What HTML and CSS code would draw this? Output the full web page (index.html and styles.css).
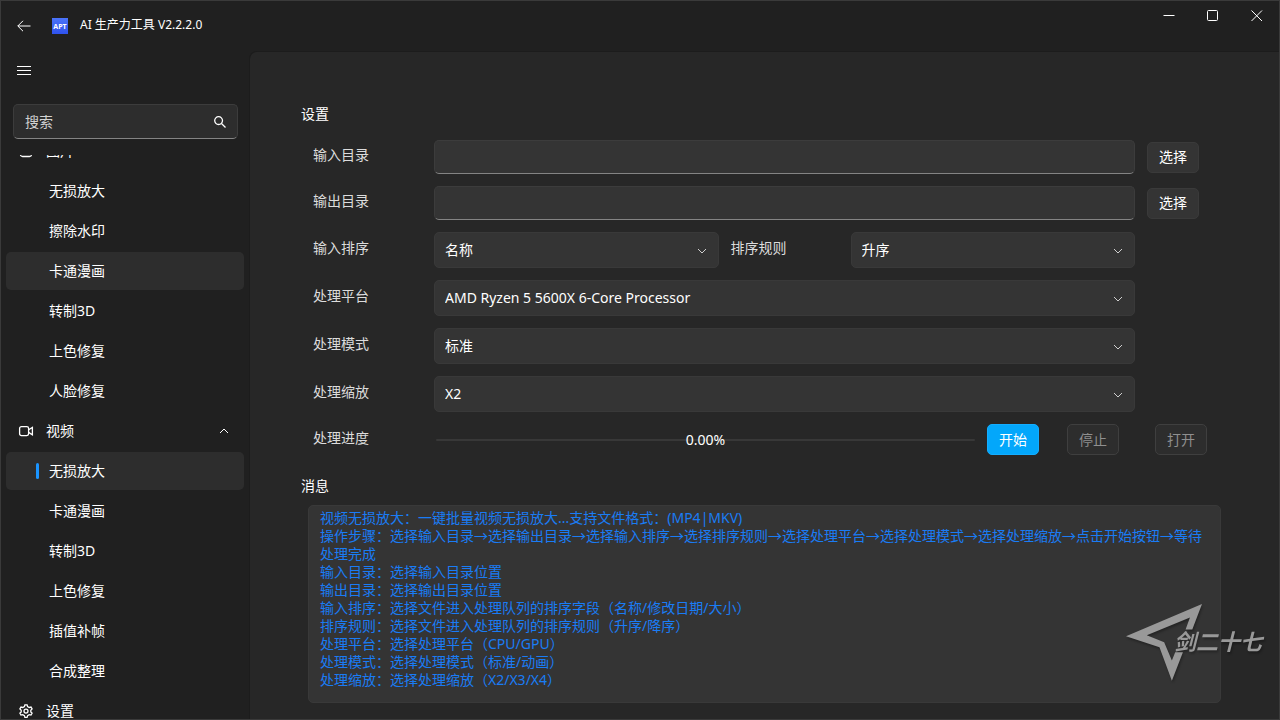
FILE: index.html
```html
<!DOCTYPE html>
<html lang="zh-CN">
<head>
<meta charset="utf-8">
<title>AI 生产力工具</title>
<link rel="stylesheet" href="styles.css">
</head>
<body>
<div class="window">
  <header class="titlebar">
    <button class="icon-button back" type="button" aria-label="返回">
      <svg width="14" height="12" viewBox="0 0 14 12"><path d="M6 .8 .8 6 6 11.200M.8 6H13.500"/></svg>
    </button>
    <svg class="app-logo" width="16" height="16" viewBox="0 0 16 16" aria-hidden="true">
      <defs><linearGradient id="logo" x1="0" y1="0" x2="0" y2="1"><stop offset="0" stop-color="#4b74fa"/><stop offset="1" stop-color="#2f52ee"/></linearGradient></defs>
      <rect width="16" height="16" fill="url(#logo)"/>
      <text class="logo-text" x="8" y="11" text-anchor="middle">APT</text>
    </svg>
    <h1 class="app-title">AI 生产力工具 V2.2.2.0</h1>
    <div class="window-buttons">
      <button class="icon-button caption" type="button" aria-label="最小化"><svg width="12" height="12" viewBox="0 0 12 12"><path d="M.5 5.500h11"/></svg></button>
      <button class="icon-button caption" type="button" aria-label="最大化"><svg width="12" height="12" viewBox="0 0 12 12"><rect x=".5" y=".5" width="10" height="10" rx="1"/></svg></button>
      <button class="icon-button caption" type="button" aria-label="关闭"><svg width="12" height="12" viewBox="0 0 12 12"><path d="m.5.5 10.500 10.500M11 .5.5 11"/></svg></button>
    </div>
  </header>

  <aside class="sidebar">
    <button class="icon-button menu" type="button" aria-label="菜单">
      <svg width="14" height="11" viewBox="0 0 14 11"><path d="M0 1.500h14M0 5.500h14M0 9.500h14"/></svg>
    </button>
    <div class="search">
      <input class="search-input" type="search" placeholder="搜索" aria-label="搜索">
      <svg class="search-icon" width="12" height="12" viewBox="0 0 12 12"><circle cx="4.600" cy="4.600" r="3.900"/><path d="m7.500 7.500 4 4"/></svg>
    </div>
    <nav class="nav">
      <a class="nav-item group first" href="#">
        <svg class="nav-icon" width="16" height="16" viewBox="0 0 16 16"><rect x="2.500" y="2.500" width="11" height="11" rx="2"/></svg>图片
      </a>
      <a class="nav-item" href="#">无损放大</a>
      <a class="nav-item" href="#">擦除水印</a>
      <a class="nav-item active" href="#">卡通漫画</a>
      <a class="nav-item" href="#">转制3D</a>
      <a class="nav-item" href="#">上色修复</a>
      <a class="nav-item" href="#">人脸修复</a>
      <a class="nav-item group" href="#">
        <svg class="nav-icon" width="16" height="16" viewBox="0 0 16 16"><rect x="1.600" y="3.600" width="9" height="9" rx="1.800"/><path d="m10.600 6.800 3.800-2.400v7.400l-3.800-2.400"/></svg>视频
        <svg class="nav-chevron" width="10" height="6" viewBox="0 0 10 6"><path d="m1 5 4-4 4 4"/></svg>
      </a>
      <a class="nav-item active current" href="#" aria-current="page">无损放大</a>
      <a class="nav-item" href="#">卡通漫画</a>
      <a class="nav-item" href="#">转制3D</a>
      <a class="nav-item" href="#">上色修复</a>
      <a class="nav-item" href="#">插值补帧</a>
      <a class="nav-item" href="#">合成整理</a>
      <a class="nav-item group" href="#">
        <svg class="nav-icon" width="16" height="16" viewBox="0 0 16 16"><path d="m6.400 3.600.5-1.800h2.200l.5 1.800 1.600.9 1.800-.4 1.100 1.900L12.800 7.300v1.600l1.300 1.300-1.100 1.900-1.800-.4-1.600.9-.5 1.800H6.900l-.5-1.800-1.600-.9-1.800.4-1.100-1.900 1.300-1.300V7.300L1.900 6l1.100-1.900 1.800.4z"/><circle cx="8" cy="8.100" r="2"/></svg>设置
      </a>
    </nav>
  </aside>

  <main class="content">
    <h2 class="section-title">设置</h2>
    <form class="settings">
      <div class="row">
        <label class="label" for="in-dir">输入目录</label>
        <input class="text-box" id="in-dir" type="text">
        <button class="button" type="button">选择</button>
      </div>
      <div class="row">
        <label class="label" for="out-dir">输出目录</label>
        <input class="text-box" id="out-dir" type="text">
        <button class="button" type="button">选择</button>
      </div>
      <div class="row">
        <label class="label" for="sort">输入排序</label>
        <div class="pair">
          <div class="combo">
            <select class="select" id="sort"><option>名称</option></select>
            <svg class="chevron" width="10" height="6" viewBox="0 0 10 6"><path d="m1 1 4 4 4-4"/></svg>
          </div>
          <label class="label" for="order">排序规则</label>
          <div class="combo">
            <select class="select" id="order"><option>升序</option></select>
            <svg class="chevron" width="10" height="6" viewBox="0 0 10 6"><path d="m1 1 4 4 4-4"/></svg>
          </div>
        </div>
      </div>
      <div class="row">
        <label class="label" for="platform">处理平台</label>
        <div class="combo">
          <select class="select" id="platform"><option>AMD Ryzen 5 5600X 6-Core Processor</option></select>
          <svg class="chevron" width="10" height="6" viewBox="0 0 10 6"><path d="m1 1 4 4 4-4"/></svg>
        </div>
      </div>
      <div class="row">
        <label class="label" for="mode">处理模式</label>
        <div class="combo">
          <select class="select" id="mode"><option>标准</option></select>
          <svg class="chevron" width="10" height="6" viewBox="0 0 10 6"><path d="m1 1 4 4 4-4"/></svg>
        </div>
      </div>
      <div class="row">
        <label class="label" for="scale">处理缩放</label>
        <div class="combo">
          <select class="select" id="scale"><option>X2</option></select>
          <svg class="chevron" width="10" height="6" viewBox="0 0 10 6"><path d="m1 1 4 4 4-4"/></svg>
        </div>
      </div>
      <div class="row progress-row">
        <span class="label" id="progress-label">处理进度</span>
        <div class="progress" role="progressbar" aria-labelledby="progress-label" aria-valuenow="0">
          <div class="track"></div>
          <span class="progress-text">0.00%</span>
        </div>
        <div class="actions">
          <button class="button primary" type="button">开始</button>
          <button class="button" type="button" disabled>停止</button>
          <button class="button last" type="button" disabled>打开</button>
        </div>
      </div>
    </form>
    <h2 class="section-title" id="message-title">消息</h2>
    <textarea class="messages" aria-labelledby="message-title" readonly>视频无损放大：一键批量视频无损放大...支持文件格式：(MP4|MKV)
操作步骤：选择输入目录→选择输出目录→选择输入排序→选择排序规则→选择处理平台→选择处理模式→选择处理缩放→点击开始按钮→等待处理完成
输入目录：选择输入目录位置
输出目录：选择输出目录位置
输入排序：选择文件进入处理队列的排序字段（名称/修改日期/大小）
排序规则：选择文件进入处理队列的排序规则（升序/降序）
处理平台：选择处理平台（CPU/GPU）
处理模式：选择处理模式（标准/动画）
处理缩放：选择处理缩放（X2/X3/X4）</textarea>
  </main>

  <div class="watermark">
    <svg width="76" height="77" viewBox="0 0 227 230"><path d="M0 96 227 0l-29 76h-20l13-36L62 93l52 21 23 55 10-25h23l-33 85-37-100z"/></svg>
    <span class="watermark-text">剑二十七</span>
  </div>
</div>
</body>
</html>
```
FILE: styles.css
```css
* { box-sizing: border-box; }

body {
  margin: 0;
  background: #202020;
  color: #fff;
  font: 14px/20px "Noto Sans", "Noto Sans CJK SC", sans-serif;
}

button, input, select, textarea { font: inherit; color: inherit; }

svg { fill: none; stroke: #fff; stroke-width: 1; flex: none; }

h1, h2 { margin: 0; font-size: 14px; font-weight: 400; }

.window {
  position: relative;
  display: grid;
  grid-template: 50px minmax(0, 1fr) / 248px minmax(0, 1fr);
  height: 100vh;
  border: 1px solid #3a3a3a;
  overflow: hidden;
}

.titlebar {
  grid-column: 1 / -1;
  display: flex;
  align-items: center;
}

.icon-button {
  display: flex;
  align-items: center;
  justify-content: center;
  padding: 0;
  border: 0;
  background: none;
}

.back { width: 46px; height: 48px; }
.app-logo { margin-left: 5px; stroke: none; }
.logo-text { fill: #fff; font: 700 7px "Open Sans", sans-serif; }
.app-title { margin-left: 12px; padding-bottom: 2px; font-size: 12px; }

.window-buttons { display: flex; align-self: flex-start; margin-left: auto; }
.caption { width: 44px; height: 30px; }

.sidebar {
  display: flex;
  flex-direction: column;
  min-height: 0;
}

.menu { width: 46px; height: 39px; flex: none; }

.search { position: relative; margin: 14px 11px 16px 12px; }

.search-input,
.text-box {
  display: block;
  width: 100%;
  height: 34px;
  padding: 0 11px;
  border: 1px solid #3c3c3c;
  border-bottom-color: #848484;
  border-radius: 5px;
  background: #343434;
  outline: 0;
}

.search-input { height: 35px; appearance: none; background: #2d2d2d; }
.search-input::placeholder { color: #d2d2d2; opacity: 1; }
.search-icon { position: absolute; right: 12px; top: 12px; stroke-width: 1.3; }

.nav { flex: 1; min-height: 0; overflow: hidden; }

.nav-item {
  position: relative;
  display: flex;
  align-items: center;
  height: 38px;
  margin: 0 5px 2px;
  padding-left: 43px;
  border-radius: 5px;
  color: #fff;
  text-decoration: none;
}

.nav-item.first { margin-top: -23px; }
.nav-item.active { background: #2d2d2d; }
.nav-item.group { padding-left: 12px; }
.nav-icon { margin-right: 12px; stroke-width: 1.3; }
.nav-chevron { margin-left: auto; margin-right: 15px; }

.current::before {
  content: "";
  position: absolute;
  left: 30px;
  top: 11px;
  width: 3px;
  height: 16px;
  border-radius: 2px;
  background: #1a94ff;
}

.content {
  display: flex;
  flex-direction: column;
  min-height: 0;
  padding: 52px 0 16px 51px;
  border: solid #1c1c1c;
  border-width: 1px 0 0 1px;
  border-radius: 8px 0 0 0;
  background: #272727;
}

.settings {
  display: flex;
  flex-direction: column;
  gap: 12px;
  margin: 16px 80px 21px 12px;
}

.row {
  display: grid;
  grid-template-columns: 109px minmax(0, 1fr) 52px;
  gap: 12px;
  align-items: center;
}

.label { padding-bottom: 4px; color: #dcdcdc; }

.pair {
  display: grid;
  grid-template-columns: 1fr 108px 1fr;
  gap: 12px;
  align-items: center;
}

.combo { position: relative; }

.select {
  display: block;
  width: 100%;
  height: 36px;
  padding: 0 10px;
  border: 1px solid #393939;
  border-radius: 5px;
  background: #343434;
  appearance: none;
}

.chevron { position: absolute; right: 12px; top: 16px; stroke: #cfcfcf; }

.button {
  width: 52px;
  height: 31px;
  padding: 0;
  border: 1px solid #3a3a3a;
  border-radius: 5px;
  background: #343434;
}

.button:disabled { border-color: #3f3f3f; background: #2d2d2d; color: #8f8f8f; }
.button.primary { border-color: #14adff; background: #03a7fb; }

.progress-row {
  grid-template-columns: 109px minmax(0, 1fr) auto;
  margin-right: -8px;
}

.progress { display: grid; align-items: center; margin-left: 2px; }
.track { grid-area: 1 / 1; height: 2px; border-radius: 1px; background: #383838; }
.progress-text { grid-area: 1 / 1; justify-self: center; }

.actions { display: flex; gap: 28px; }
.last { margin-left: 8px; }

.messages {
  flex: 1;
  min-height: 0;
  margin: 9px 58px 0 7px;
  padding: 3px 11px;
  border: 1px solid #393939;
  border-radius: 5px;
  background: #343434;
  color: #1a7cf5;
  line-height: 18px;
  resize: none;
  outline: 0;
  overflow: hidden;
}

.watermark {
  position: absolute;
  right: 17px;
  bottom: 38px;
  display: flex;
  align-items: center;
  filter: drop-shadow(1px 2px 1px rgba(0, 0, 0, .3));
  pointer-events: none;
}

.watermark svg { fill: #999; stroke: none; }

.watermark-text {
  margin-left: -28px;
  padding-bottom: 6px;
  color: #999;
  font: italic 700 22px/24px "Noto Sans CJK SC", sans-serif;
}
```
